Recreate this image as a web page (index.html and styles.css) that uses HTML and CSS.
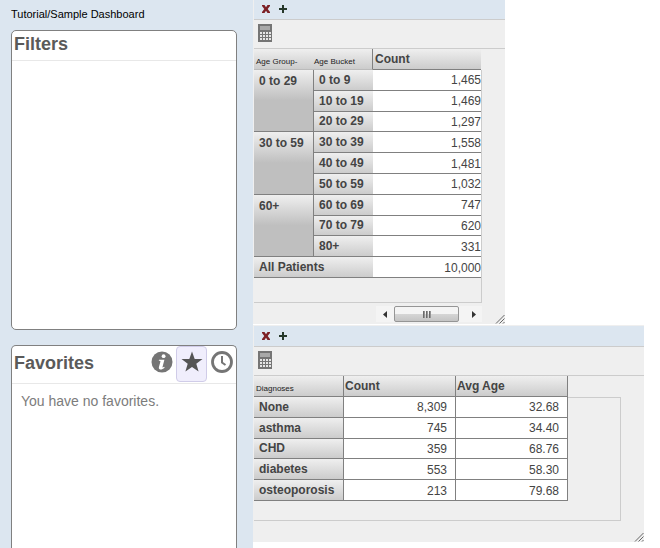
FILE: index.html
```
<!DOCTYPE html>
<html lang="en">
<head>
    <meta charset="UTF-8">
    <meta name="viewport" content="width=device-width, initial-scale=1.0">
    <title>Tutorial/Sample Dashboard</title>
    <link rel="stylesheet" href="styles.css">
</head>
<body>
    <!-- shared icons -->
    <svg class="sprite" aria-hidden="true">
        <symbol id="icon-close" viewBox="0 0 10 10">
            <path d="M1 1h2.500L5 3.200 6.500 1H9v1L6.700 5 9 8v1H6.500L5 6.800 3.500 9H1V8l2.300-3L1 2z" fill="#7c1f24"/>
        </symbol>
        <symbol id="icon-add" viewBox="0 0 10 10">
            <path d="M4 1h2v3h3v2H6v3H4V6H1V4h3z" fill="#26382a"/>
        </symbol>
        <symbol id="icon-calc" viewBox="0 0 14 18">
            <path d="M0 0h14v18H0z" fill="#757575"/>
            <path d="M2 2h10v4H2z" fill="#a9a9a9"/>
            <path d="M2 8h2v2H2zM5 8h2v2H5zM8 8h2v2H8zM11 8h2v2h-2zM2 11h2v2H2zM5 11h2v2H5zM8 11h2v2H8zM11 11h2v2h-2zM2 14h2v2H2zM5 14h2v2H5zM8 14h2v2H8zM11 14h2v2h-2z" fill="#e6e6e6"/>
        </symbol>
        <symbol id="icon-resize" viewBox="0 0 10 10">
            <path d="M1 9.500L9.500 1M4.500 9.500l5-5M8 9.500L9.500 8" fill="none" stroke="#666" stroke-width="1"/>
        </symbol>
    </svg>

    <div class="dashboard">
        <aside class="sidebar">
            <div class="path">Tutorial/Sample Dashboard</div>

            <section class="panel filters">
                <h2 class="panel-title">Filters</h2>
            </section>

            <section class="panel favorites">
                <div class="panel-header">
                    <h2 class="panel-title">Favorites</h2>
                    <div class="panel-tools">
                        <button class="tool" type="button" aria-label="Info">
                            <svg width="22" height="22" viewBox="0 0 22 22">
                                <circle cx="11" cy="11" r="10.500" fill="#757575"/>
                                <circle cx="12.600" cy="5.200" r="1.900" fill="#fff"/>
                                <path d="M8 8.800h5.400l-1.900 7.100c-.2.800.4.800 1.600-.2l.6.700c-1.800 1.700-3.300 2.200-4.600 2-1.200-.2-1.500-1.200-1.100-2.600l1.400-5.100c.1-.6-.2-.8-1.600-.9z" fill="#fff"/>
                            </svg>
                        </button>
                        <button class="tool active" type="button" aria-label="Favorites">
                            <svg width="22" height="22" viewBox="0 0 22 22">
                                <path d="M11 .5l2.700 7.500h7.800l-6.200 4.800 2.300 7.700L11 16l-6.600 4.500 2.300-7.700L.5 8h7.800z" fill="#555"/>
                            </svg>
                        </button>
                        <button class="tool" type="button" aria-label="Recent">
                            <svg width="22" height="22" viewBox="0 0 22 22">
                                <circle cx="11" cy="11" r="9.500" fill="#fff" stroke="#757575" stroke-width="2.800"/>
                                <path d="M11 5v6.500l3.500 2.500" fill="none" stroke="#757575" stroke-width="2"/>
                            </svg>
                        </button>
                    </div>
                </div>
                <p class="empty">You have no favorites.</p>
            </section>
        </aside>

        <main class="widgets">
            <section class="widget ages">
                <div class="titlebar">
                    <button type="button" aria-label="Close"><svg width="10" height="10"><use href="#icon-close"/></svg></button>
                    <button type="button" aria-label="Add"><svg width="10" height="10"><use href="#icon-add"/></svg></button>
                </div>
                <div class="toolbar">
                    <button type="button" aria-label="Calculator"><svg width="14" height="18"><use href="#icon-calc"/></svg></button>
                </div>
                <div class="grid">
                    <table>
                        <colgroup>
                            <col class="col-group">
                            <col class="col-bucket">
                            <col>
                        </colgroup>
                        <thead>
                            <tr>
                                <th class="small">Age Group-</th>
                                <th class="small">Age Bucket</th>
                                <th class="measure">Count</th>
                            </tr>
                        </thead>
                        <tbody>
                            <tr><th class="group" rowspan="3">0 to 29</th><th>0 to 9</th><td>1,465</td></tr>
                            <tr><th>10 to 19</th><td>1,469</td></tr>
                            <tr><th>20 to 29</th><td>1,297</td></tr>
                            <tr><th class="group" rowspan="3">30 to 59</th><th>30 to 39</th><td>1,558</td></tr>
                            <tr><th>40 to 49</th><td>1,481</td></tr>
                            <tr><th>50 to 59</th><td>1,032</td></tr>
                            <tr><th class="group" rowspan="3">60+</th><th>60 to 69</th><td>747</td></tr>
                            <tr><th>70 to 79</th><td>620</td></tr>
                            <tr><th>80+</th><td>331</td></tr>
                            <tr><th colspan="2">All Patients</th><td>10,000</td></tr>
                        </tbody>
                    </table>
                </div>
                <div class="scrollbar">
                    <button type="button" aria-label="Scroll left"><svg width="4" height="7" viewBox="0 0 4 7"><path d="M4 0v7L0 3.500z" fill="#333"/></svg></button>
                    <div class="thumb"><i></i><i></i><i></i></div>
                    <button type="button" aria-label="Scroll right"><svg width="4" height="7" viewBox="0 0 4 7"><path d="M0 0v7l4-3.500z" fill="#333"/></svg></button>
                </div>
                <svg class="resize" width="10" height="10"><use href="#icon-resize"/></svg>
            </section>

            <section class="widget diagnoses">
                <div class="titlebar">
                    <button type="button" aria-label="Close"><svg width="10" height="10"><use href="#icon-close"/></svg></button>
                    <button type="button" aria-label="Add"><svg width="10" height="10"><use href="#icon-add"/></svg></button>
                </div>
                <div class="toolbar">
                    <button type="button" aria-label="Calculator"><svg width="14" height="18"><use href="#icon-calc"/></svg></button>
                </div>
                <div class="grid">
                    <table>
                        <colgroup>
                            <col class="col-diagnosis">
                            <col>
                            <col>
                        </colgroup>
                        <thead>
                            <tr>
                                <th class="small">Diagnoses</th>
                                <th class="measure">Count</th>
                                <th class="measure">Avg Age</th>
                            </tr>
                        </thead>
                        <tbody>
                            <tr><th>None</th><td>8,309</td><td>32.68</td></tr>
                            <tr><th>asthma</th><td>745</td><td>34.40</td></tr>
                            <tr><th>CHD</th><td>359</td><td>68.76</td></tr>
                            <tr><th>diabetes</th><td>553</td><td>58.30</td></tr>
                            <tr><th>osteoporosis</th><td>213</td><td>79.68</td></tr>
                        </tbody>
                    </table>
                </div>
                <svg class="resize" width="10" height="10"><use href="#icon-resize"/></svg>
            </section>
        </main>
    </div>
</body>
</html>
```
FILE: styles.css
```
* {
    box-sizing: border-box;
}
body {
    margin: 0;
    font-family: "Liberation Sans", Arial, sans-serif;
    font-size: 12px;
    color: #444;
    background: #fff;
}
button {
    display: flex;
    padding: 0;
    border: 0;
    background: none;
}
svg {
    display: block;
}
.sprite {
    display: none;
}
.dashboard {
    display: flex;
    min-height: 100vh;
}

/* sidebar */
.sidebar {
    display: flex;
    flex: 0 0 253px;
    flex-direction: column;
    padding: 8px 16px 0 11px;
    background: #dce6f0;
}
.path {
    height: 22px;
    font-size: 11px;
    line-height: 13px;
    color: #000;
}
.panel {
    border: 1px solid #808080;
    border-radius: 5px;
    background: #fff;
}
.panel-title {
    margin: 0;
    padding-left: 2px;
    font-size: 18px;
    line-height: 26px;
    color: #5a5a5a;
}
.filters {
    min-height: 300px;
    margin-bottom: 15px;
}
.filters .panel-title {
    padding-bottom: 3px;
    border-bottom: 1px solid #e8e8e8;
}
.favorites {
    flex: 1;
    border-bottom: 0;
    border-radius: 5px 5px 0 0;
}
.panel-header {
    display: flex;
    justify-content: space-between;
    padding-bottom: 1px;
    border-bottom: 1px solid #e8e8e8;
}
.panel-header .panel-title {
    line-height: 34px;
}
.panel-tools {
    display: flex;
}
.tool {
    width: 29px;
    height: 36px;
    padding-bottom: 4px;
    align-items: center;
    justify-content: center;
}
.tool.active {
    width: 31px;
    border: 1px solid #d0cce8;
    border-radius: 4px;
    background: #f0eefc;
}
.empty {
    margin: 0;
    padding: 9px;
    font-size: 14px;
    line-height: 16px;
    color: #7c7c7c;
}

/* widgets */
.widgets {
    flex: 1;
}
.widget {
    position: relative;
    border-left: 1px solid #efefef;
    background: #efefef;
}
.ages {
    width: 62%;
    margin-bottom: 1px;
    padding-bottom: 2px;
}
.diagnoses {
    margin-right: 16px;
    padding-bottom: 21px;
    border-top: 1px solid #efefef;
}
.titlebar {
    display: flex;
    gap: 7px;
    height: 20px;
    padding: 4px 7px;
    border-bottom: 1px solid #ccc;
    background: #dce6f0;
}
.diagnoses .titlebar {
    height: 21px;
    padding-top: 5px;
}
.toolbar {
    height: 29px;
    padding: 4px;
    border-bottom: 1px solid #ccc;
}
.resize {
    position: absolute;
    right: 0;
    bottom: 0;
}

/* the box starts below the column headers, which stick out above it */
.grid {
    margin-top: 21px;
    border: 1px solid #ccc;
    border-left: 0;
}
.grid table {
    margin-top: -22px;
    border-spacing: 0;
    table-layout: fixed;
}
.ages .grid {
    width: 228px;
    padding-bottom: 24px;
}
.ages table {
    width: 227px;
    height: 229px;
}
.diagnoses .grid {
    margin-right: 23px;
    padding-bottom: 19px;
}
.diagnoses table {
    width: 314px;
    height: 125px;
}
.col-group {
    width: 60px;
}
.col-bucket {
    width: 59px;
}
.col-diagnosis {
    width: 90px;
}
th,
td {
    padding: 0;
    border-bottom: 1px solid #808080;
    line-height: 14px;
}
th {
    padding-left: 5px;
    text-align: left;
    background: linear-gradient(#efefef, #ccc);
}
td {
    padding-top: 1px;
    text-align: right;
    background: #fff;
}
thead th {
    height: 21px;
    padding-left: 2px;
}
.diagnoses .measure {
    padding-left: 1px;
}
.small {
    padding-top: 6px;
    font-size: 8px;
    font-weight: normal;
    white-space: nowrap;
    color: #222;
}
.group {
    padding-top: 4px;
    border-right: 1px solid #808080;
    vertical-align: top;
    background: linear-gradient(#efefef, #bfbfbf 50%);
}
.ages .small {
    border-bottom-color: #bbb;
}
.ages .small + .small {
    padding-left: 0;
}
.ages .small + .small,
.diagnoses th,
.diagnoses td {
    border-right: 1px solid #808080;
}
.diagnoses td {
    padding-right: 8px;
}

/* scrollbar */
.scrollbar {
    display: flex;
    width: 106px;
    height: 16px;
    margin: 3px 0 0 122px;
    background: #f4f4f4;
}
.scrollbar button {
    width: 18px;
    align-items: center;
    justify-content: center;
}
.scrollbar button:last-child {
    flex: 1;
    padding-left: 7px;
}
.thumb {
    display: flex;
    align-items: center;
    justify-content: center;
    gap: 1px;
    width: 65px;
    border: 1px solid #959595;
    border-radius: 2px;
    background: linear-gradient(#f4f4f4 50%, #d6d6d6 50%, #c4c4c4);
}
.thumb i {
    width: 2px;
    height: 7px;
    background: linear-gradient(90deg, #555, #aaa);
}
```
